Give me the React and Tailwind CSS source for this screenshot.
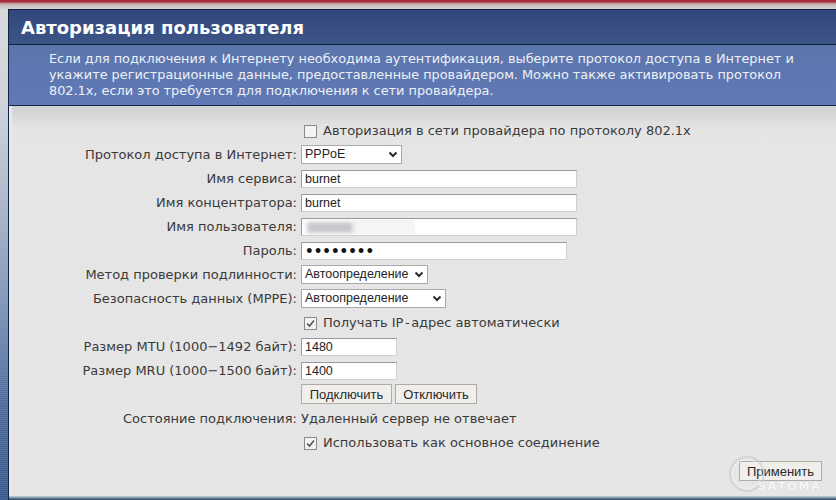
import React from 'react';

const FONT_UI = "font-['DejaVu_Sans',Verdana,sans-serif]";

function Chevron() {
  return (
    <svg width="10" height="7" viewBox="0 0 10 7" className="shrink-0" aria-hidden="true">
      <path d="M1.5 1.5 L5 5 L8.5 1.5" fill="none" stroke="#2b2b30" strokeWidth="2" />
    </svg>
  );
}

function Checkbox({ checked }) {
  return (
    <span className="flex h-[13px] w-[13px] shrink-0 items-center justify-center border border-[#8a8a8a] bg-[#f4f4f2]">
      {checked && (
        <svg width="11" height="11" viewBox="0 0 11 11" aria-hidden="true">
          <path d="M2 5.5 L4.5 8 L9 2.5" fill="none" stroke="#4d5a4d" strokeWidth="1.6" />
        </svg>
      )}
    </span>
  );
}

function Select({ width, value }) {
  return (
    <div className={`-mt-px flex h-[19px] items-center justify-between border border-[#a9a9a9] bg-white pl-[3px] pr-[3px] font-['Liberation_Sans',Arial,sans-serif] text-[12.5px] text-[#222] ${width}`}>
      <span>{value}</span>
      <Chevron />
    </div>
  );
}

function TextInput({ width, value }) {
  return (
    <input
      readOnly
      type="text"
      value={value}
      className={`h-[18px] border border-[#9a9a9a] border-b-[#cfcfcf] border-r-[#cfcfcf] bg-white px-[3px] font-['Liberation_Sans',Arial,sans-serif] text-[12.5px] text-[#222] outline-none ${width}`}
    />
  );
}

function PasswordInput({ width, value }) {
  return (
    <input
      readOnly
      type="password"
      value={value}
      className={`h-[18px] border border-[#9a9a9a] border-b-[#cfcfcf] border-r-[#cfcfcf] bg-white px-[3px] font-['DejaVu_Sans',sans-serif] text-[13.5px] font-bold text-[#111] outline-none ${width}`}
    />
  );
}

function Row({ label, children }) {
  return (
    <>
      <div className="whitespace-nowrap text-right">{label}</div>
      <div className="flex items-center">{children}</div>
    </>
  );
}

function CheckRow({ checked, children }) {
  return (
    <>
      <div />
      <div className="flex items-center gap-[6px] pl-[3px]">
        <Checkbox checked={checked} />
        <span className="whitespace-nowrap">{children}</span>
      </div>
    </>
  );
}

function Button({ width, children }) {
  return (
    <button
      type="button"
      className={`h-[20px] border border-[#b0aca4] bg-[#f1efec] font-['Liberation_Sans',Arial,sans-serif] text-[13px] text-[#2a2a2a] ${width}`}
    >
      {children}
    </button>
  );
}

export default function App() {
  return (
    <div className={`flex h-[500px] w-[836px] flex-col overflow-hidden bg-[#d9d9d9] ${FONT_UI}`}>
      {/* Browser edge */}
      <div className="h-[9px] shrink-0 bg-gradient-to-b from-[#a8283c] from-20% via-[#c4b4b6] via-45% to-[#d4d4d4]" />

      <div className="flex min-h-0 flex-1">
        <div className="w-[8px] shrink-0 bg-[repeating-linear-gradient(to_bottom,rgba(255,255,255,0.07)_0_1px,transparent_1px_2px),linear-gradient(to_bottom,#d8d8da_0%,#ccd2da_20%,#aab5c8_40%,#7f95b8_60%,#4f6e9e_80%,#3b5b8e_100%)]" />

        <div className="flex min-w-0 flex-1 flex-col border-l border-[#13233f]">
          <div className="flex h-[36px] shrink-0 items-center border-y border-[#13233f] bg-gradient-to-b from-[#32487c] to-[#3d5487] pl-[12px] text-[18px] font-bold text-white">
            Авторизация пользователя
          </div>

          <div className="h-[61px] shrink-0 border-b border-[#13233f] bg-gradient-to-b from-[#5b76ac] to-[#6079b7] pl-[40px] pt-[6px] text-[12.85px] leading-[16px] text-[#eef1f6]">
            <p className="whitespace-nowrap">Если для подключения к Интернету необходима аутентификация, выберите протокол доступа в Интернет и</p>
            <p className="whitespace-nowrap">укажите регистрационные данные, предоставленные провайдером. Можно также активировать протокол</p>
            <p className="whitespace-nowrap">802.1x, если это требуется для подключения к сети провайдера.</p>
          </div>

          <div className="relative flex-1 border-l-[3px] border-[#e4e9f0] bg-gradient-to-b from-[#d0d0d0] via-[#e5e5e5] via-[6%] to-[#e6e6e6] text-[13px] text-[#3a3a3a]">
            <div className="grid grid-cols-[285px_1fr] items-center gap-x-[4px] pt-[13px] [grid-auto-rows:24px]">
              <CheckRow>Авторизация в сети провайдера по протоколу 802.1x</CheckRow>
              <Row label="Протокол доступа в Интернет:">
                <Select width="w-[101px]" value="PPPoE" />
              </Row>
              <Row label="Имя сервиса:">
                <TextInput width="w-[276px]" value="burnet" />
              </Row>
              <Row label="Имя концентратора:">
                <TextInput width="w-[276px]" value="burnet" />
              </Row>
              <Row label="Имя пользователя:">
                <div className="flex h-[18px] w-[276px] items-center overflow-hidden border border-[#9a9a9a] border-b-[#cfcfcf] border-r-[#cfcfcf] bg-white pl-[5px]">
                  <div className="h-[11px] w-[46px] bg-[#c9c5cd] blur-[2px]" />
                  <div className="h-[14px] w-[62px] bg-[#f5f5f5]" />
                </div>
              </Row>
              <Row label="Пароль:">
                <PasswordInput width="w-[266px]" value="12345678" />
              </Row>
              <Row label="Метод проверки подлинности:">
                <Select width="w-[127px]" value="Автоопределение" />
              </Row>
              <Row label="Безопасность данных (MPPE):">
                <Select width="w-[145px]" value="Автоопределение" />
              </Row>
              <CheckRow checked>
                Получать IP<span className="px-[1.5px]">-</span>адрес автоматически
              </CheckRow>
              <Row label="Размер MTU (1000−1492 байт):">
                <TextInput width="w-[96px]" value="1480" />
              </Row>
              <Row label="Размер MRU (1000−1500 байт):">
                <TextInput width="w-[96px]" value="1400" />
              </Row>
              <Row label="">
                <div className="-mt-[2px] flex gap-[3px]">
                  <Button width="w-[91px]">Подключить</Button>
                  <Button width="w-[82px]">Отключить</Button>
                </div>
              </Row>
              <Row label="Состояние подключения:">
                <span className="whitespace-nowrap">Удаленный сервер не отвечает</span>
              </Row>
              <CheckRow checked>Использовать как основное соединение</CheckRow>
            </div>

            {/* Apply button with the site watermark lying over it */}
            <div className="absolute bottom-[15px] right-[14px]">
              <Button width="w-[83px]">Применить</Button>
            </div>
            <svg width="38" height="38" viewBox="0 0 38 38" className="absolute bottom-[3px] right-[70px] opacity-70" aria-hidden="true">
              <circle cx="19" cy="19" r="17" fill="none" stroke="#cdcdcd" strokeWidth="2" />
              <circle cx="19" cy="19" r="14.5" fill="none" stroke="#f6f6f6" strokeWidth="1" />
            </svg>
            <span className="absolute bottom-[4px] right-[14px] text-[11px] leading-none font-bold tracking-[2px] text-white opacity-70 [text-shadow:0_0_1px_#b5b5b5]">
              SATOMA
            </span>
          </div>

          <div className="h-[4px] shrink-0 bg-gradient-to-b from-[#c4d8de] to-[#24425c]" />
        </div>
      </div>
    </div>
  );
}
